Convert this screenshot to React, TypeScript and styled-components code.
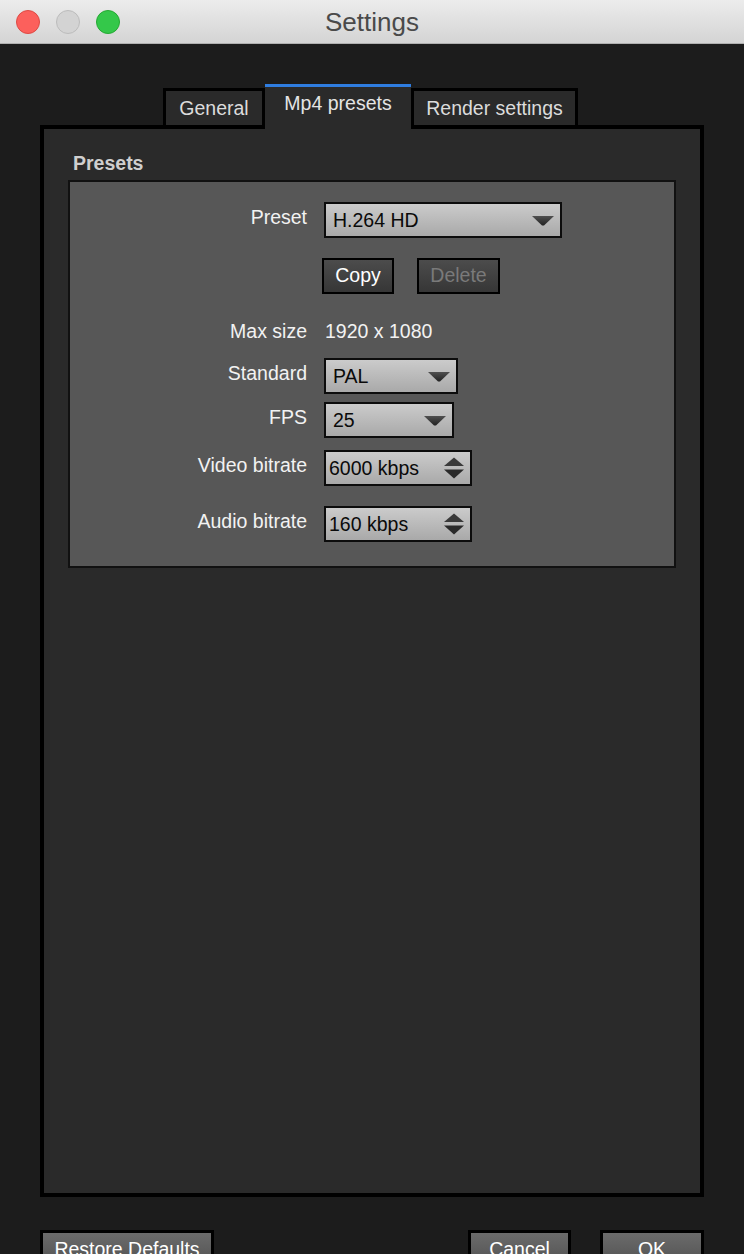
import React from 'react';
import styled, { createGlobalStyle } from 'styled-components';

const Global = createGlobalStyle`
  html, body { margin: 0; padding: 0; background: #1c1c1c; }
  body { font-family: "Liberation Sans", Arial, Helvetica, sans-serif; }
  * { box-sizing: border-box; }
`;

const Window = styled.div`
  width: 744px;
  height: 1254px;
  overflow: hidden;
  background: #1c1c1c;
  display: flex;
  flex-direction: column;
`;

const TitleBar = styled.div`
  height: 44px;
  flex: none;
  display: grid;
  grid-template-columns: 1fr auto 1fr;
  align-items: center;
  background: linear-gradient(#ececec, #d4d4d4);
  border-bottom: 1px solid #b0b0b0;
`;

const Lights = styled.div`
  display: flex;
  gap: 16px;
  padding-left: 16px;
`;

const Light = styled.span<{ $fill: string; $edge: string }>`
  width: 24px;
  height: 24px;
  border-radius: 50%;
  background: ${p => p.$fill};
  border: 1px solid ${p => p.$edge};
`;

const Title = styled.div`
  font-size: 26px;
  color: #4a4a4a;
  line-height: 30px;
`;

const Content = styled.div`
  padding: 0 40px;
  display: flex;
  flex-direction: column;
`;

const TabBar = styled.div`
  margin-top: 40px;
  height: 41px;
  display: flex;
  align-items: flex-end;
  padding-left: 123px;
`;

const Tab = styled.div<{ $w: number }>`
  width: ${p => p.$w}px;
  height: 37px;
  background: #2a2a2a;
  border: 3px solid #000;
  border-bottom: none;
  color: #dcdcdc;
  font-size: 19.5px;
  display: flex;
  align-items: center;
  justify-content: center;
  padding-top: 1px;
`;

const ActiveTab = styled.div<{ $w: number }>`
  width: ${p => p.$w}px;
  height: 45px;
  margin-bottom: -4px;
  position: relative;
  z-index: 1;
  background: #2a2a2a;
  border-top: 3px solid #2f7de0;
  color: #e4e4e4;
  font-size: 19.5px;
  display: flex;
  justify-content: center;
  padding-top: 5px;
`;

const Panel = styled.div`
  height: 1072px;
  border: 4px solid #000;
  background: #2a2a2a;
  padding: 23px 24px;
  display: flex;
  flex-direction: column;
`;

const GroupTitle = styled.div`
  font-weight: bold;
  font-size: 19.5px;
  line-height: 22px;
  color: #cfcfcf;
  padding-left: 5px;
  margin-bottom: 6px;
`;

const GroupBox = styled.div`
  border: 2px solid #111;
  background: #575757;
  padding: 20px 0 24px;
  display: flex;
  flex-direction: column;
`;

const Row = styled.div<{ $mt?: number }>`
  display: grid;
  grid-template-columns: 237px auto;
  column-gap: 17px;
  align-items: center;
  margin-top: ${p => p.$mt ?? 0}px;
`;

const Label = styled.div<{ $lift?: number }>`
  text-align: right;
  color: #f2f2f2;
  font-size: 19.5px;
  line-height: 22px;
  margin-bottom: ${p => p.$lift ?? 6}px;
`;

const Value = styled.div`
  color: #f2f2f2;
  font-size: 19.5px;
  line-height: 22px;
  padding-left: 1px;
`;

const Field = styled.div<{ $w: number; $pad?: number }>`
  width: ${p => p.$w}px;
  height: 36px;
  border: 2px solid #0c0c0c;
  background: linear-gradient(#cbcbcb, #a9a9a9);
  display: flex;
  align-items: center;
  justify-content: space-between;
  padding-left: ${p => p.$pad ?? 7}px;
  padding-right: 6px;
  color: #0a0a0a;
  font-size: 19.5px;
`;

const Buttons = styled.div`
  display: flex;
  gap: 23px;
  margin-left: -2px;
`;

const SmallButton = styled.div<{ $w: number; $disabled?: boolean }>`
  width: ${p => p.$w}px;
  height: 36px;
  border: 2px solid #000;
  background: linear-gradient(#4c4c4c, #363636);
  color: ${p => (p.$disabled ? '#7a7a7a' : '#ffffff')};
  font-size: 19.5px;
  display: flex;
  align-items: center;
  justify-content: center;
  padding-bottom: 2px;
`;

const Footer = styled.div`
  margin-top: 33px;
  padding: 0 40px;
  display: flex;
  justify-content: space-between;
`;

const FooterGroup = styled.div`
  display: flex;
  gap: 29px;
`;

const FooterButton = styled.div<{ $w: number }>`
  width: ${p => p.$w}px;
  height: 40px;
  border: 3px solid #000;
  border-bottom: none;
  background: linear-gradient(#6b6b6b, #4e4e4e);
  color: #fff;
  font-size: 19.5px;
  display: flex;
  justify-content: center;
  padding-top: 5px;
`;

const DropArrow = () => (
  <svg width="22" height="11" viewBox="0 0 22 11">
    <defs>
      <linearGradient id="ag" x1="0" y1="0" x2="0" y2="1">
        <stop offset="0" stopColor="#505050" />
        <stop offset="1" stopColor="#222" />
      </linearGradient>
    </defs>
    <polygon points="0,1 22,1 12,10.5 10,10.5" fill="url(#ag)" />
  </svg>
);

const SpinArrows = () => (
  <svg width="20" height="22" viewBox="0 0 20 22">
    <polygon points="10,0.5 20,9 0,9" fill="#3a3a3a" />
    <polygon points="0,12.5 20,12.5 10,21.5" fill="#2a2a2a" />
  </svg>
);

export default function App() {
  return (
    <Window>
      <Global />
      <TitleBar>
        <Lights>
          <Light $fill="#fc605c" $edge="#de4a44" />
          <Light $fill="#d3d3d3" $edge="#bcbcbc" />
          <Light $fill="#34c84a" $edge="#25a933" />
        </Lights>
        <Title>Settings</Title>
        <div />
      </TitleBar>
      <Content>
        <TabBar>
          <Tab $w={102}>General</Tab>
          <ActiveTab $w={146}>Mp4 presets</ActiveTab>
          <Tab $w={167}>Render settings</Tab>
        </TabBar>
        <Panel>
          <GroupTitle>Presets</GroupTitle>
          <GroupBox>
            <Row>
              <Label>Preset</Label>
              <Field $w={238}>
                <span>H.264 HD</span>
                <DropArrow />
              </Field>
            </Row>
            <Row $mt={20}>
              <div />
              <Buttons>
                <SmallButton $w={72}>Copy</SmallButton>
                <SmallButton $w={83} $disabled>Delete</SmallButton>
              </Buttons>
            </Row>
            <Row $mt={26}>
              <Label $lift={0}>Max size</Label>
              <Value>1920 x 1080</Value>
            </Row>
            <Row $mt={16}>
              <Label>Standard</Label>
              <Field $w={134}>
                <span>PAL</span>
                <DropArrow />
              </Field>
            </Row>
            <Row $mt={8}>
              <Label>FPS</Label>
              <Field $w={130}>
                <span>25</span>
                <DropArrow />
              </Field>
            </Row>
            <Row $mt={12}>
              <Label>Video bitrate</Label>
              <Field $w={148} $pad={3}>
                <span>6000 kbps</span>
                <SpinArrows />
              </Field>
            </Row>
            <Row $mt={20}>
              <Label>Audio bitrate</Label>
              <Field $w={148} $pad={3}>
                <span>160 kbps</span>
                <SpinArrows />
              </Field>
            </Row>
          </GroupBox>
        </Panel>
      </Content>
      <Footer>
        <FooterButton $w={174}>Restore Defaults</FooterButton>
        <FooterGroup>
          <FooterButton $w={103}>Cancel</FooterButton>
          <FooterButton $w={104}>OK</FooterButton>
        </FooterGroup>
      </Footer>
    </Window>
  );
}
